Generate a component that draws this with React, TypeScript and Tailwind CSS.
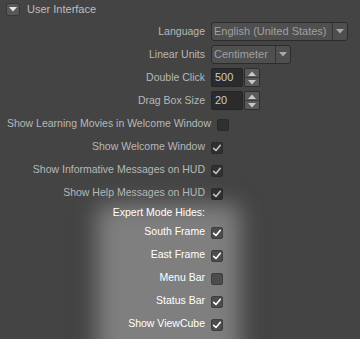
import React from 'react';

function Check({ light }: { light?: boolean }) {
  return (
    <svg viewBox="0 0 12 12" className="w-[10px] h-[10px]">
      <path
        d="M2 6.4 L4.8 9 L10 2.8"
        fill="none"
        stroke={light ? '#ffffff' : '#c4c4c4'}
        strokeWidth="1.9"
        strokeLinecap="round"
        strokeLinejoin="round"
      />
    </svg>
  );
}

function Checkbox({ checked, expert }: { checked: boolean; expert?: boolean }) {
  return (
    <div
      className={`w-[12px] h-[12px] rounded-[2px] border flex items-center justify-center shrink-0 mt-[2px] ${
        expert ? 'bg-[#4c4c4c] border-[#3e3e3e]' : 'bg-[#303030] border-[#2a2a2a]'
      }`}
    >
      {checked && <Check light={expert} />}
    </div>
  );
}

function Arrow({ up, color = '#b4b4b4' }: { up?: boolean; color?: string }) {
  return (
    <svg viewBox="0 0 8 5" className="w-[8px] h-[5px]">
      <path d={up ? 'M0 5 L4 0.5 L8 5 Z' : 'M0 0 L4 4.5 L8 0 Z'} fill={color} />
    </svg>
  );
}

function Dropdown({ value, width }: { value: string; width: string }) {
  return (
    <div className={`${width} h-[19px] flex border border-[#2c2c2c] rounded-[3px] bg-[#4f4f4f]`}>
      <div className="flex-1 flex items-center pl-[2px] text-[#a0a0a0] text-[11px] whitespace-nowrap">{value}</div>
      <div className="w-[15px] border-l border-[#333333] flex items-center justify-center">
        <Arrow color="#a8a8a8" />
      </div>
    </div>
  );
}

function Spin({ value }: { value: string }) {
  return (
    <div className="flex gap-[1px] h-[19px]">
      <div className="w-[32px] bg-[#2b2b2b] border border-[#252525] rounded-[2px] flex items-center pl-[3px] text-[11px] text-[#c6ccd8]">
        {value}
      </div>
      <div className="w-[16px] flex flex-col border border-[#2c2c2c] rounded-[2px] overflow-hidden">
        <div className="flex-1 bg-[#5a5a5a] flex items-center justify-center border-b border-[#3a3a3a]">
          <Arrow up color="#c8c8c8" />
        </div>
        <div className="flex-1 bg-[#5a5a5a] flex items-center justify-center">
          <Arrow color="#c8c8c8" />
        </div>
      </div>
    </div>
  );
}

function Row({
  label,
  children,
  labelWidth = 'w-[205px]',
  expert,
}: {
  label: string;
  children?: React.ReactNode;
  labelWidth?: string;
  expert?: boolean;
}) {
  return (
    <div className="h-[23px] flex items-center gap-[6px]">
      <div
        className={`${labelWidth} shrink-0 text-right whitespace-nowrap ${
          expert ? 'text-[#ffffff]' : 'text-[#b8b8b8]'
        }`}
      >
        {label}
      </div>
      {children}
    </div>
  );
}

export default function App() {
  const normal = [
    { label: 'Show Welcome Window', checked: true },
    { label: 'Show Informative Messages on HUD', checked: true },
    { label: 'Show Help Messages on HUD', checked: true },
  ];
  const expert = [
    { label: 'South Frame', checked: true },
    { label: 'East Frame', checked: true },
    { label: 'Menu Bar', checked: false },
    { label: 'Status Bar', checked: true },
    { label: 'Show ViewCube', checked: true },
  ];

  return (
    <div className="w-[360px] h-[339px] bg-[#444444] relative overflow-hidden font-['Liberation_Sans',Arial,sans-serif] text-[10.5px] leading-none">
      {/* highlight behind the expert-mode group */}
      <div className="absolute left-[97px] top-[204px] w-[143px] h-[165px] rounded-[10px] bg-[#7f7f7f] blur-[11px]" />

      <div className="relative flex flex-col">
        {/* Section header */}
        <div className="h-[20px] flex items-start pt-[3px] pl-[6px] gap-[7px]">
          <div className="w-[14px] h-[13px] rounded-[3px] bg-[#585858] border border-[#363636] flex items-center justify-center">
            <Arrow color="#e6e6e6" />
          </div>
          <div className="text-[11px] text-[#bebebe] mt-[1px]">User Interface</div>
        </div>

        <Row label="Language">
          <Dropdown value="English (United States)" width="w-[137px]" />
        </Row>
        <Row label="Linear Units">
          <Dropdown value="Centimeter" width="w-[80px]" />
        </Row>
        <Row label="Double Click">
          <Spin value="500" />
        </Row>
        <Row label="Drag Box Size">
          <Spin value="20" />
        </Row>
        <Row label="Show Learning Movies in Welcome Window" labelWidth="w-[211px]">
          <Checkbox checked={false} />
        </Row>
        {normal.map((r) => (
          <Row key={r.label} label={r.label}>
            <Checkbox checked={r.checked} />
          </Row>
        ))}

        <div className="h-[16px] flex items-center">
          <div className="w-[205px] text-right text-[#ffffff]">Expert Mode Hides:</div>
        </div>
        {expert.map((r) => (
          <Row key={r.label} label={r.label} expert>
            <Checkbox checked={r.checked} expert />
          </Row>
        ))}
      </div>
    </div>
  );
}
